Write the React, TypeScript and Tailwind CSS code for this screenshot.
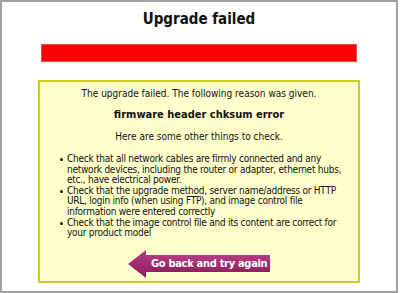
const items = [
  "Check that all network cables are firmly connected and any network devices, including the router or adapter, ethernet hubs, etc., have electrical power.",
  "Check that the upgrade method, server name/address or HTTP URL, login info (when using FTP), and image control file information were entered correctly",
  "Check that the image control file and its content are correct for your product model",
];

export default function App() {
  const font = { fontFamily: '"DejaVu Sans Condensed", "DejaVu Sans", sans-serif' };
  return (
    <div className="w-[400px] h-[293px] bg-white overflow-hidden">
      <div
        className="w-[398px] h-[293px] border-2 border-[#a0a0a0] bg-white flex flex-col items-center text-[#111]"
        style={font}
      >
        <h1 className="mt-[8px] text-[15px] leading-[18px] font-bold">Upgrade failed</h1>
        <div className="mt-[16px] w-[316px] h-[18px] bg-[#ff0000] border border-[#e05050]" />
        <div className="mt-[18px] w-[322px] h-[203px] border-2 border-[#cccc1e] bg-[#ffffcc] flex flex-col items-center text-[10px]">
          <p className="mt-[6px] leading-[12px]">The upgrade failed. The following reason was given.</p>
          <p className="mt-[8px] text-[11px] leading-[13px] font-bold">firmware header chksum error</p>
          <p className="mt-[10px] leading-[12px]">Here are some other things to check.</p>
          <ul className="mt-[11px] self-start pl-[20px] flex flex-col leading-[10.6px] tracking-[-0.25px]">
            {items.map((t) => (
              <li key={t} className="flex items-start">
                <span className="mt-[4px] w-[3px] h-[3px] rounded-full bg-[#111] shrink-0" />
                <span className="ml-[4px] w-[282px]">{t}</span>
              </li>
            ))}
          </ul>
          <div className="mt-[11px] flex items-center">
            <svg width="18" height="28" viewBox="0 0 18 28" className="block">
              <defs>
                <linearGradient id="ah" x1="0" y1="0" x2="0" y2="1">
                  <stop offset="0" stopColor="#b83a84" />
                  <stop offset="1" stopColor="#8e1c5c" />
                </linearGradient>
              </defs>
              <polygon points="0,14 18,0 18,28" fill="url(#ah)" />
            </svg>
            <div className="h-[17px] w-[124px] bg-gradient-to-b from-[#b83a84] to-[#92205f] flex items-center pl-[5px] text-white font-bold text-[11px] leading-[17px] whitespace-nowrap tracking-[-0.3px]">
              Go back and try again
            </div>
          </div>
        </div>
      </div>
    </div>
  );
}
